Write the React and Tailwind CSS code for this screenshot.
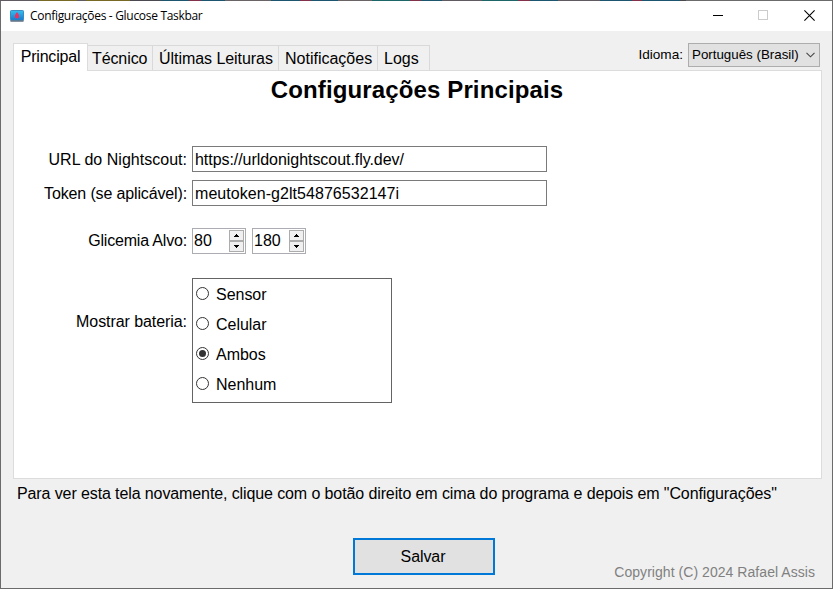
import React from "react";

const TABS = [
  { label: "Técnico", box: "w-[65px] pl-[4px]", text: "tracking-[-0.1px]" },
  { label: "Últimas Leituras", box: "w-[126px] pl-[6px]", text: "tracking-[-0.05px]" },
  { label: "Notificações", box: "w-[99px] pl-[6px]", text: "tracking-[0px]" },
  { label: "Logs", box: "w-[52px] pl-[6px]", text: "tracking-[0px]" },
];

const BATTERY = ["Sensor", "Celular", "Ambos", "Nenhum"];

// Desktop colours that show through the translucent window edge.
const EDGE = [
  "w-[39px] bg-[#5f5b60]",
  "w-[38px] bg-[#786a24]",
  "w-[9px] bg-[#5f5b60]",
  "w-[44px] bg-[#786a24]",
  "w-[31px] bg-[#4c4850]",
  "w-[28px] bg-[#1c566e]",
  "w-[12px] bg-[#83304a]",
  "w-[24px] bg-[#1c566e]",
  "w-[46px] bg-[#6b6466]",
  "w-[29px] bg-[#1c566e]",
  "w-[11px] bg-[#83304a]",
  "w-[27px] bg-[#1c566e]",
  "w-[34px] bg-[#6b6466]",
  "w-[38px] bg-[#1d6668]",
  "w-[11px] bg-[#83304a]",
  "w-[21px] bg-[#1c566e]",
  "w-[40px] bg-[#5f5b60]",
  "w-[36px] bg-[#1d6668]",
  "w-[12px] bg-[#83304a]",
  "w-[28px] bg-[#1c566e]",
  "w-[42px] bg-[#5f5b60]",
  "w-[32px] bg-[#1c566e]",
  "w-[10px] bg-[#83304a]",
  "w-[38px] bg-[#1c566e]",
  "w-[6px] bg-[#4c4850]",
  "flex-1 bg-[#6b6b6b]",
];

function AppIcon() {
  return (
    <svg width="14" height="12" viewBox="0 0 14 12" className="block">
      <defs>
        <linearGradient id="screen" x1="0" y1="0" x2="0" y2="1">
          <stop offset="0" stopColor="#36c0f0" />
          <stop offset="1" stopColor="#1478cc" />
        </linearGradient>
      </defs>
      <rect x="0.5" y="0.5" width="13" height="9.8" rx="0.8" fill="url(#screen)" stroke="#3c8cc0" />
      <path d="M0 10.2h14l-.6 1.5H.6z" fill="#5c6f82" />
      <path d="M7 2C7.8 3.5 9.1 4.7 9.1 6.4A2.1 2.1 0 0 1 4.9 6.4C4.9 4.7 6.2 3.5 7 2z" fill="#f0305c" />
    </svg>
  );
}

function TitleBar() {
  return (
    <header className="flex h-[30px] shrink-0 items-center bg-white pl-[9px]">
      <AppIcon />
      <span className="ml-[6px] font-['Open_Sans',sans-serif] text-[12px] leading-[16px] tracking-[-0.31px] text-black">
        Configurações - Glucose Taskbar
      </span>
      <div className="ml-auto flex h-full items-start gap-[36px] pt-[9px] pr-[17px]">
        <svg width="10" height="10" className="-mr-px block" shapeRendering="crispEdges">
          <path d="M0 5.5h10" stroke="#000" />
        </svg>
        <svg width="10" height="10" className="block" shapeRendering="crispEdges">
          <rect x="0.5" y="0.5" width="9" height="9" fill="none" stroke="#ccc" />
        </svg>
        <svg width="11" height="11" className="block">
          <path d="M.4.4l10.2 10.2M10.6.4L.4 10.6" stroke="#000" strokeWidth="1.1" />
        </svg>
      </div>
    </header>
  );
}

function Field({ label, value, labelTracking, valueTracking }) {
  return (
    <div className="flex h-[26px] items-center gap-[5px]">
      <span className={`w-[173px] pt-px text-right ${labelTracking}`}>{label}</span>
      <div className={`flex h-[26px] w-[355px] items-center border border-[#7a7a7a] bg-white pt-px pl-[2px] ${valueTracking}`}>
        {value}
      </div>
    </div>
  );
}

function Spinner({ value }) {
  return (
    <div className="flex h-[26px] w-[54px] items-center justify-between border border-[#abadb3] bg-white pr-px pl-[1px]">
      <span>{value}</span>
      <svg width="15" height="22" className="block" shapeRendering="crispEdges">
        <rect x="0.5" y="0.5" width="14" height="10" fill="#f0f0f0" stroke="#acacac" />
        <rect x="0.5" y="11.5" width="14" height="10" fill="#f0f0f0" stroke="#acacac" />
        <path d="M7 4h1v1h1v1h1v1H5V6h1V5h1z" fill="#000" />
        <path d="M5 15h5v1H9v1H8v1H7v-1H6v-1H5z" fill="#000" />
      </svg>
    </div>
  );
}

function Radio({ label, checked }) {
  return (
    <div className="flex h-[30px] items-start gap-[7px]">
      <svg width="13" height="13" className="mt-[8px] block">
        <circle cx="6.5" cy="6.5" r="6" fill="#fff" stroke="#333" />
        {checked && <circle cx="6.5" cy="6.5" r="3.5" fill="#333" />}
      </svg>
      <span className="pt-[7px] tracking-[-0.03px]">{label}</span>
    </div>
  );
}

export default function App() {
  return (
    <div className="flex h-[589px] w-[833px] flex-col overflow-hidden bg-[#f0f0f0] font-['Liberation_Sans',Arial,sans-serif] text-[16px] leading-[18px] whitespace-nowrap text-black">
      <div className="flex h-px shrink-0">
        {EDGE.map((segment, i) => (
          <div key={i} className={segment} />
        ))}
      </div>
      <div className="flex flex-1 flex-col border border-t-0 border-[#6b6b6b]">
        <TitleBar />
        <div className="flex h-[39px] shrink-0 items-end justify-between pl-[12px]">
          <nav className="flex items-end">
            <div className="z-10 -mb-px flex h-[28px] w-[75px] justify-center border border-b-0 border-[#dcdcdc] bg-white pt-[4px] tracking-[-0.2px]">
              Principal
            </div>
            {TABS.map((t) => (
              <div key={t.label} className={`flex h-[25px] justify-start border-t border-r border-[#d9d9d9] pt-[4px] ${t.box}`}>
                <span className={t.text}>{t.label}</span>
              </div>
            ))}
          </nav>
          <div className="mb-[3px] flex items-center gap-[5px] pr-[12px] text-[13.33px] leading-[16px]">
            <span className="text-[13.6px]">Idioma:</span>
            <div className="flex h-[24px] w-[132px] items-center justify-between border border-[#adadad] bg-[#e1e1e1] pr-[4px] pl-[3px]">
              <span>Português (Brasil)</span>
              <svg width="9" height="6" className="block">
                <path d="M.5.8l4 4 4-4" fill="none" stroke="#444" strokeWidth="1.1" />
              </svg>
            </div>
          </div>
        </div>

        <main className="mr-[10px] ml-[12px] h-[409px] w-[809px] shrink-0 border border-[#dcdcdc] bg-white">
          <h1 className="mt-[5px] pr-px text-center text-[24px] leading-[28px] font-bold tracking-[0.13px]">
            Configurações Principais
          </h1>
          <div className="mt-[42px] flex flex-col gap-[8px]">
            <Field
              label="URL do Nightscout:"
              value="https://urldonightscout.fly.dev/"
              labelTracking="tracking-[0.02px]"
              valueTracking="tracking-[-0.05px]"
            />
            <Field
              label="Token (se aplicável):"
              value="meutoken-g2lt54876532147i"
              labelTracking="tracking-[-0.14px]"
              valueTracking="tracking-[0.05px]"
            />
          </div>
          <div className="mt-[22px] flex items-center">
            <span className="mr-[5px] w-[173px] text-right tracking-[-0.18px]">Glicemia Alvo:</span>
            <div className="flex gap-[6px]">
              <Spinner value="80" />
              <Spinner value="180" />
            </div>
          </div>
          <div className="mt-[24px] flex items-start">
            <span className="mt-[35px] mr-[5px] w-[173px] text-right tracking-[-0.07px]">Mostrar bateria:</span>
            <div className="h-[125px] w-[200px] border border-[#646464] pl-[3px]">
              {BATTERY.map((b) => (
                <Radio key={b} label={b} checked={b === "Ambos"} />
              ))}
            </div>
          </div>
        </main>

        <p className="mt-[6px] pl-[16px] tracking-[-0.107px]">
          Para ver esta tela novamente, clique com o botão direito em cima do programa e depois em "Configurações"
        </p>
        <footer className="mt-[35px] flex items-start">
          <div className="ml-[352px] flex h-[37px] w-[142px] items-center justify-center border-2 border-[#0078d7] bg-[#e1e1e1] pr-[2px] tracking-[-0.1px]">
            Salvar
          </div>
          <span className="mt-[26px] mr-[17px] ml-auto text-[14px] leading-[16px] tracking-[0.05px] text-[#808080]">
            Copyright (C) 2024 Rafael Assis
          </span>
        </footer>
      </div>
    </div>
  );
}
